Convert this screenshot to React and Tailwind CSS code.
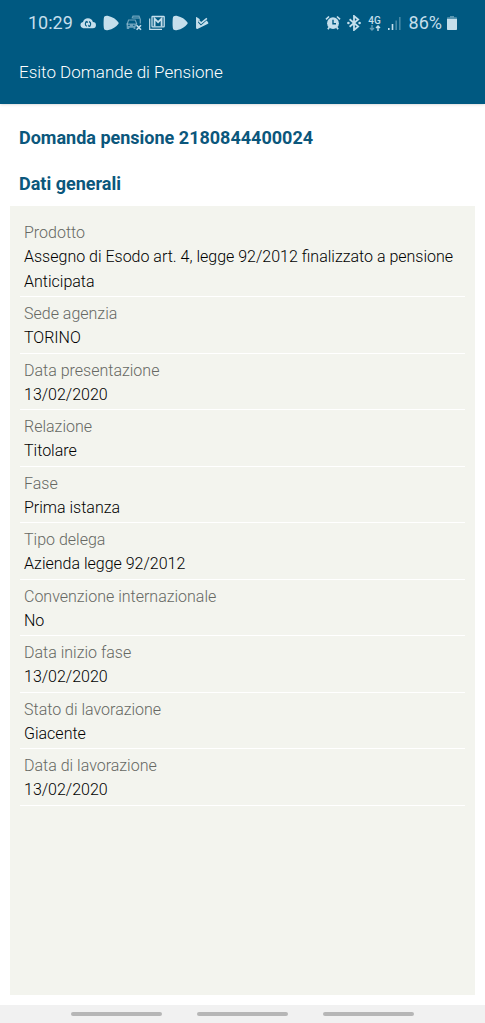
import React from 'react';

const details = [
  { label: 'Prodotto', value: 'Assegno di Esodo art. 4, legge 92/2012 finalizzato a pensione Anticipata' },
  { label: 'Sede agenzia', value: 'TORINO' },
  { label: 'Data presentazione', value: '13/02/2020' },
  { label: 'Relazione', value: 'Titolare' },
  { label: 'Fase', value: 'Prima istanza' },
  { label: 'Tipo delega', value: 'Azienda legge 92/2012' },
  { label: 'Convenzione internazionale', value: 'No' },
  { label: 'Data inizio fase', value: '13/02/2020' },
  { label: 'Stato di lavorazione', value: 'Giacente' },
  { label: 'Data di lavorazione', value: '13/02/2020' },
];

const CloudIcon = () => (
  <svg viewBox="0 0 16 16" className="size-4" fill="currentColor" aria-hidden="true">
    <path d="M3.200 13.200a3.200 3.200 0 0 1-.2-6.300A5.200 5.200 0 0 1 12.900 7a3.100 3.100 0 0 1-.1 6.200z" />
    <g fill="none" stroke="#005981" strokeWidth="1.100">
      <path d="M7 6.600a2.400 2.400 0 0 0 0 4.600M9 6.600a2.400 2.400 0 0 1 0 4.600" />
      <path d="M5.600 6.400H7.400V8M10.400 11.400H8.600V9.800" strokeWidth=".8" />
    </g>
  </svg>
);

const BlobIcon = () => (
  <svg viewBox="0 0 16 16" className="size-4" fill="currentColor" aria-hidden="true">
    <path d="M.8 3.200C1.100 1 2.800.5 5.400 1c4 .8 8 3.400 9.900 6.200.5.700.5 1.100 0 1.700-1.900 2.700-5.900 5.300-9.900 6.100-2.700.5-4.300 0-4.600-2.300-.3-2.700-.3-6.300 0-9.500z" />
  </svg>
);

const CarIcon = () => (
  <svg viewBox="0 0 16 16" className="size-4" aria-hidden="true">
    <g fill="none" stroke="currentColor" strokeWidth="1.200" opacity=".55">
      <path d="M6 3.500 7 1.200h6l1.300 3.200v4" />
      <path d="M7 3h6.500" />
      <path d="M1 9.500 2.600 5h6.600l1.600 4" />
    </g>
    <path d="M.5 8.500h10.500v1.800l-1.600 1.700v2H7.600v-1.200H3.200V14H.8z" fill="currentColor" opacity=".55" />
    <path d="M2 10.300h2M7 10.300h1.600" stroke="#005981" />
    <path d="m10.600 10.200 4.400 4.600M15 10.200l-4.400 4.600" stroke="currentColor" strokeWidth="1.600" />
  </svg>
);

const MailIcon = () => (
  <svg viewBox="0 0 16 16" className="size-4" fill="none" stroke="currentColor" aria-hidden="true">
    <path d="M.7 3.500v10.800H13" strokeWidth="1.200" />
    <rect x="3" y="1.500" width="12.200" height="10.300" rx=".6" strokeWidth="1.300" />
    <path d="M5.600 11.500V3.600l3.500 3.600 3.500-3.600v7.900" strokeWidth="1.800" />
  </svg>
);

const PlayCheckIcon = () => (
  <svg viewBox="0 0 16 16" className="size-4" aria-hidden="true">
    <path d="M1.200 2 5 4.200 3 6.500 6 9.300 11.500 5l1.800 2.800c.2.400.1.700-.3.900L2.400 14c-.7.300-1.200 0-1.200-.7z" fill="currentColor" />
    <path d="m3.300 5.800 2.700 2.700 6-5.300" fill="none" stroke="#005981" strokeWidth="3" />
    <path d="m3.400 5.400 2.700 2.700 5.800-4.700" fill="none" stroke="currentColor" strokeWidth="1.600" />
    <path d="M1.200 2v11h1.900V3.200z" fill="currentColor" />
  </svg>
);

const AlarmIcon = () => (
  <svg viewBox="0 0 16 16" className="size-4" aria-hidden="true">
    <circle cx="8" cy="8.200" r="5.900" fill="currentColor" />
    <path d="M8 4.700V8.700h3" fill="none" stroke="#005981" strokeWidth="1.400" />
    <path d="M1 4.300 4 1.500M15 4.300 12 1.500M4.300 12.300l-1.400 2M11.700 12.300l1.400 2" stroke="currentColor" strokeWidth="1.700" />
  </svg>
);

const BluetoothIcon = () => (
  <svg viewBox="0 0 16 16" className="size-4" aria-hidden="true">
    <path d="m3.600 4.200 8.600 7.300L8 15V1l4.200 3.500-8.600 7.300" fill="none" stroke="currentColor" strokeWidth="1.800" />
    <circle cx="2.400" cy="8" r="1.300" fill="currentColor" />
    <circle cx="13.600" cy="8" r="1.300" fill="currentColor" />
  </svg>
);

const DataArrowsIcon = () => (
  <svg viewBox="0 0 12 6" className="h-1.5 w-3" fill="none" stroke="currentColor" strokeWidth="1.400" aria-hidden="true">
    <path d="M3 0v5M1 3l2 2 2-2" opacity=".5" />
    <path d="M9 6V1M7 3l2-2 2 2" />
  </svg>
);

const SignalIcon = () => (
  <svg viewBox="0 0 14 14" className="size-3.5" fill="currentColor" aria-hidden="true">
    <rect x="0" y="12" width="1.600" height="2" />
    <rect x="3.700" y="8" width="1.600" height="6" />
    <rect x="7.400" y="4.500" width="1.600" height="9.500" opacity=".35" />
    <rect x="11" y="1" width="1.600" height="13" opacity=".35" />
  </svg>
);

const BatteryIcon = () => (
  <svg viewBox="0 0 10 14" className="h-3.5 w-2.5" fill="currentColor" aria-hidden="true">
    <path d="M3 0h4v1.200h2.200c.5 0 .8.300.8.800v1.200H0V2c0-.5.300-.8.800-.8H3z" opacity=".45" />
    <path d="M0 3h10v10c0 .6-.4 1-1 1H1c-.6 0-1-.4-1-1z" />
  </svg>
);

const StatusBar = () => (
  <div className="flex h-[46px] items-center justify-between px-7 text-[#c5dfec]">
    <div className="flex items-center gap-[7px]">
      <span className="text-lg">10:29</span>
      <CloudIcon />
      <BlobIcon />
      <CarIcon />
      <MailIcon />
      <BlobIcon />
      <PlayCheckIcon />
    </div>
    <div className="flex items-center gap-[5px]">
      <AlarmIcon />
      <BluetoothIcon />
      <div className="flex w-4 flex-col items-center">
        <span className="text-[10px] leading-[9px] font-medium">4G</span>
        <DataArrowsIcon />
      </div>
      <SignalIcon />
      <span className="ml-0.5 text-lg">86%</span>
      <BatteryIcon />
    </div>
  </div>
);

const DetailRow = ({ label, value }) => (
  <div className="border-b border-white pt-1.5 pl-1 odd:pb-0.5 even:pb-[3px]">
    <dt className="leading-[22px] text-[#666863]">{label}</dt>
    <dd className="leading-[25px] text-black">{value}</dd>
  </div>
);

const App = () => {
  return (
    <div className="flex min-h-screen flex-col bg-white font-[Roboto,sans-serif] text-base">
      <header className="h-[104px] bg-[#005981] shadow-sm">
        <StatusBar />
        <p className="px-[19px] text-[17px] leading-[52px] font-light text-white">Esito Domande di Pensione</p>
      </header>

      <main className="flex flex-1 flex-col px-2.5 pb-2.5">
        <h1 className="px-[9px] pt-[22px] text-lg leading-6 font-bold text-[#0b577c]">
          Domanda pensione 2180844400024
        </h1>
        <h2 className="px-[9px] pt-[22px] pb-2.5 text-lg leading-6 font-bold text-[#0b577c]">Dati generali</h2>

        <section className="flex-1 bg-[#f3f4ee] p-2.5">
          <dl className="font-light">
            {details.map((item) => (
              <DetailRow key={item.label} label={item.label} value={item.value} />
            ))}
          </dl>
        </section>
      </main>

      {/* Android gesture hints */}
      <footer className="flex h-[18px] items-center justify-center gap-[35px] bg-[#f1f1f1]">
        <span className="h-1 w-[91px] rounded-full bg-[#b6b6b6]" />
        <span className="h-1 w-[91px] rounded-full bg-[#b6b6b6]" />
        <span className="h-1 w-[91px] rounded-full bg-[#b6b6b6]" />
      </footer>
    </div>
  );
};

export default App;
